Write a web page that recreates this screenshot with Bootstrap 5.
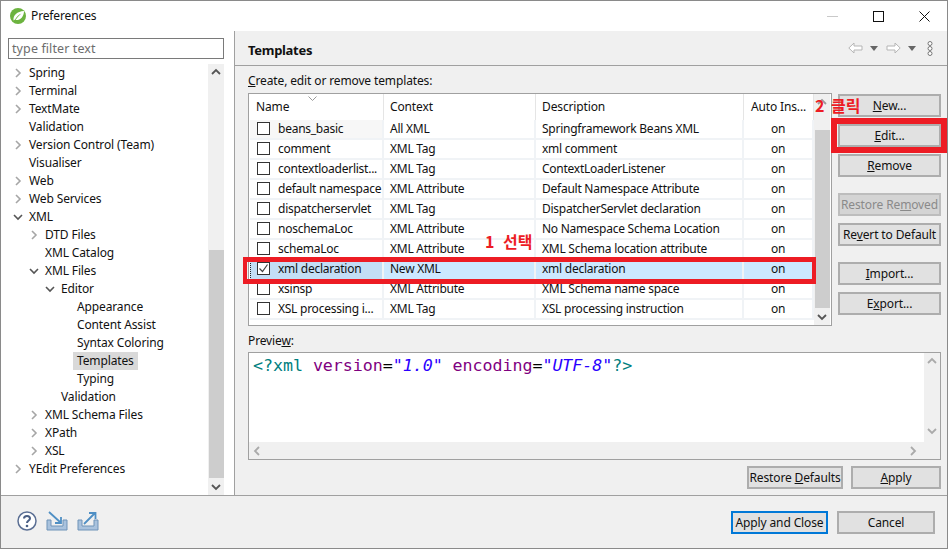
<!DOCTYPE html>
<html lang="en"><head><meta charset="utf-8"><title>Preferences</title>
<link href="https://cdn.jsdelivr.net/npm/bootstrap@5.3.0/dist/css/bootstrap.min.css" rel="stylesheet">
<style>
html,body{margin:0;height:549px;overflow:hidden;background:#fff}
body{font:12px/16px "Noto Sans","Liberation Sans",sans-serif;color:#111;letter-spacing:-.13px}
.win{position:relative;width:948px;height:549px;border:1px solid #8a8a8a;display:flex;flex-direction:column;overflow:hidden}
.titlebar{height:30px;flex:none;background:#fff;padding-left:9px}
.titlename{margin-left:5px}
.wbtns{margin-left:auto;padding-right:17px;gap:35px}
.mainarea{flex:1;min-height:0}
.leftpane{width:234px;flex:none;background:#fff;border-right:1px solid #a0a0a0;padding:7px 10px 0 7px}
.filter{height:21px;border:1px solid #7a7a7a;padding:0 3px;color:#6d6d6d;line-height:19px;font-size:12.5px;letter-spacing:.1px}
.treewrap{height:431px;margin-top:5px}
.tree{flex:1;list-style:none;margin:0;padding:0;width:0}
.tree li{height:18px;line-height:18px;white-space:nowrap;display:flex;align-items:center}
.tw{width:10px;flex:none;margin-right:6px;margin-left:5px}
.l1{padding-left:16px}.l2{padding-left:32px}.l3{padding-left:48px}
.l3 span{padding:0 4px;margin-left:-4px}
.sel{background:#d9d9d9}
.vsb{width:16px;flex:none;background:#f0f0f0;display:flex;flex-direction:column;align-items:center;justify-content:space-between}
.vsb .thumb{background:#cdcdcd;width:15px;margin-bottom:auto}
.tthumb{height:228px;margin-top:174px}
.ththumb{height:178px;margin-top:24px}
.rightpane{flex:1;background:#f0f0f0;min-width:0}
.phead{height:35px;border-bottom:1px solid #a0a0a0;padding:3px 10px 0 13px;font-weight:700;font-size:13px;letter-spacing:-.3px}
.tools{margin-left:auto;gap:7px;padding-right:4px;margin-top:-3px}
.fwd{margin-left:1px}
.pbody{padding:7px 6px 0 13px}
.tblrow{gap:6px;margin-top:4px}
.tblbox{width:584px;height:233px;border:1px solid #a0a0a0;background:#fff;padding:0 1px}
.tblinner{flex:1;min-width:0;overflow:hidden}
table.tpl{width:100%;table-layout:fixed;border-collapse:separate;border-spacing:0;margin:0}
.tpl th{font-weight:400;height:26px;padding:0 0 0 6px;border-right:1px solid #e5e5e5;white-space:nowrap;position:relative}
.sortc{position:absolute;left:58px;top:2px}
.tpl td{height:20px;padding:0 0 0 6px;border-right:2px solid #f0f3f6;border-bottom:2px solid #f0f3f6;white-space:nowrap;overflow:hidden;letter-spacing:-.25px}
.tpl td.nm{padding-left:7px}
.tpl td:last-child,.tpl th:last-child{padding:0;text-align:center}
.tpl tr.first td.nm{background:#f7f7f7}
.ck{display:inline-block;width:13px;height:13px;border:1px solid #333;background:#fff;vertical-align:-2px;margin-right:8px;position:relative}
.tpl tr.hl td{background:#cce8ff;border-bottom:1px dotted #222;padding-bottom:1px}
.tpl tr.hl td.nm{background:#c3def5;border-left:1px dotted #222;padding-left:6px}
.btnw{width:103px;flex:none;gap:7px;margin-top:1px}
.ebtn{display:block;width:103px;height:23px;padding:0;border:2px solid #adadad;border-radius:0;background:#e1e1e1;color:#111;font-size:12px;line-height:18px;text-align:center;white-space:nowrap;letter-spacing:-.13px}
.ebtn:disabled{color:#8a8a8a;background:#d4d4d4;opacity:1;border-color:#bdbdbd}
.gap1,.gap2{margin-top:9px}
.prevlabel{margin-top:7px}
.prevbox{height:108px;border:1px solid #a0a0a0;background:#fff;margin-top:3px;display:flex}
.prevmain{flex:1;min-width:0;display:flex;flex-direction:column}
.code{flex:1;font:16.67px/22px "DejaVu Sans Mono",monospace;padding:2px 0 0 4px;letter-spacing:-.05px;white-space:pre}
.hsb{height:17px;background:#f0f0f0;display:flex;align-items:center;justify-content:space-between;padding:0 7px 0 4px}
.c1{color:#008080}.c2{color:#7f007f}.c3{color:#2a00ff;font-style:italic}.c0{color:#000}
.pfoot{gap:8px;margin-top:6px;justify-content:flex-end}
.w96{width:96px}.w90{width:90px}.w97{width:97px}.w98{width:98px}
.bottombar{height:53px;flex:none;background:#f0f0f0;border-top:1px solid #a0a0a0;padding:1px 12px 0 16px}
.bicons{gap:9px;margin-top:-3px}
.footbtns{gap:9px}
.ebtn.dflt{border-color:#0078d7}
.redbox{position:absolute;border-style:solid;border-color:#ed1c24}
.rb1{left:242px;top:256px;width:573px;height:27px;border-width:5px 4px}
.rb2{left:830px;top:117px;width:116px;height:35px;border-width:6px 6px}
.note{position:absolute;color:#ed1c24;font:700 16px/18px "Noto Sans CJK KR",sans-serif;white-space:nowrap;word-spacing:5px;letter-spacing:0}
.n1{left:484px;top:231px}
.n2{left:814px;top:95px;word-spacing:3px}
</style></head><body>
<div class="win">
 <div class="titlebar d-flex align-items-center">
  <svg width="16" height="16" viewBox="0 0 16 16"><circle cx="8" cy="8" r="8" fill="#6cb33f"/><path d="M3.500 12.500C3 7 7 3.500 14 3c0 6-4 9.500-8.500 9 2-3 4-5 6-6.500-3 1-5 3.500-6.500 6z" fill="#fff"/></svg>
  <span class="titlename">Preferences</span>
  <div class="wbtns d-flex align-items-center">
   <svg width="11" height="11" viewBox="0 0 11 11"><path d="M0 5.500h11" stroke="#c9c9c9"/></svg>
   <svg width="11" height="11" viewBox="0 0 11 11"><rect x=".5" y=".5" width="10" height="10" fill="none" stroke="#111"/></svg>
   <svg width="11" height="11" viewBox="0 0 11 11"><path d="M.5.500l10 10M10.500.500l-10 10" stroke="#111" fill="none"/></svg>
  </div>
 </div>
 <div class="mainarea d-flex">
  <div class="leftpane">
   <div class="filter">type filter text</div>
   <div class="treewrap d-flex">
    <ul class="tree">
     <li><svg class="tw" width="10" height="10" viewBox="0 0 10 10"><path d="M3 1l4 4-4 4" fill="none" stroke="#a6a6a6" stroke-width="1.600"/></svg>Spring</li>
     <li><svg class="tw" width="10" height="10" viewBox="0 0 10 10"><path d="M3 1l4 4-4 4" fill="none" stroke="#a6a6a6" stroke-width="1.600"/></svg>Terminal</li>
     <li><svg class="tw" width="10" height="10" viewBox="0 0 10 10"><path d="M3 1l4 4-4 4" fill="none" stroke="#a6a6a6" stroke-width="1.600"/></svg>TextMate</li>
     <li><i class="tw"></i>Validation</li>
     <li><svg class="tw" width="10" height="10" viewBox="0 0 10 10"><path d="M3 1l4 4-4 4" fill="none" stroke="#a6a6a6" stroke-width="1.600"/></svg>Version Control (Team)</li>
     <li><i class="tw"></i>Visualiser</li>
     <li><svg class="tw" width="10" height="10" viewBox="0 0 10 10"><path d="M3 1l4 4-4 4" fill="none" stroke="#a6a6a6" stroke-width="1.600"/></svg>Web</li>
     <li><svg class="tw" width="10" height="10" viewBox="0 0 10 10"><path d="M3 1l4 4-4 4" fill="none" stroke="#a6a6a6" stroke-width="1.600"/></svg>Web Services</li>
     <li><svg class="tw" width="10" height="10" viewBox="0 0 10 10"><path d="M1 3l4 4 4-4" fill="none" stroke="#555" stroke-width="1.600"/></svg>XML</li>
     <li class="l1"><svg class="tw" width="10" height="10" viewBox="0 0 10 10"><path d="M3 1l4 4-4 4" fill="none" stroke="#a6a6a6" stroke-width="1.600"/></svg>DTD Files</li>
     <li class="l1"><i class="tw"></i>XML Catalog</li>
     <li class="l1"><svg class="tw" width="10" height="10" viewBox="0 0 10 10"><path d="M1 3l4 4 4-4" fill="none" stroke="#555" stroke-width="1.600"/></svg>XML Files</li>
     <li class="l2"><svg class="tw" width="10" height="10" viewBox="0 0 10 10"><path d="M1 3l4 4 4-4" fill="none" stroke="#555" stroke-width="1.600"/></svg>Editor</li>
     <li class="l3"><i class="tw"></i><span>Appearance</span></li>
     <li class="l3"><i class="tw"></i><span>Content Assist</span></li>
     <li class="l3"><i class="tw"></i><span>Syntax Coloring</span></li>
     <li class="l3"><i class="tw"></i><span class="sel">Templates</span></li>
     <li class="l3"><i class="tw"></i><span>Typing</span></li>
     <li class="l2"><i class="tw"></i>Validation</li>
     <li class="l1"><svg class="tw" width="10" height="10" viewBox="0 0 10 10"><path d="M3 1l4 4-4 4" fill="none" stroke="#a6a6a6" stroke-width="1.600"/></svg>XML Schema Files</li>
     <li class="l1"><svg class="tw" width="10" height="10" viewBox="0 0 10 10"><path d="M3 1l4 4-4 4" fill="none" stroke="#a6a6a6" stroke-width="1.600"/></svg>XPath</li>
     <li class="l1"><svg class="tw" width="10" height="10" viewBox="0 0 10 10"><path d="M3 1l4 4-4 4" fill="none" stroke="#a6a6a6" stroke-width="1.600"/></svg>XSL</li>
     <li><svg class="tw" width="10" height="10" viewBox="0 0 10 10"><path d="M3 1l4 4-4 4" fill="none" stroke="#a6a6a6" stroke-width="1.600"/></svg>YEdit Preferences</li>
    </ul>
    <div class="vsb">
     <svg class="mt-1" width="10" height="8" viewBox="0 0 10 8"><path d="M1 6l4-4 4 4" fill="none" stroke="#555" stroke-width="1.800"/></svg>
     <div class="thumb tthumb"></div>
     <svg class="mb-1" width="10" height="8" viewBox="0 0 10 8"><path d="M1 2l4 4 4-4" fill="none" stroke="#555" stroke-width="1.800"/></svg>
    </div>
   </div>
  </div>
  <div class="rightpane">
   <div class="phead d-flex align-items-center">Templates
    <div class="tools d-flex align-items-center">
     <svg width="15" height="12" viewBox="0 0 15 12"><path d="M.8 6L6 1v3h8v4H6v3z" fill="#fff" stroke="#b5b5b5"/></svg>
     <svg width="8" height="5" viewBox="0 0 8 5"><path d="M0 0h8L4 5z" fill="#666"/></svg>
     <svg class="fwd" width="15" height="12" viewBox="0 0 15 12"><path d="M14.200 6L9 1v3H1v4h8v3z" fill="#fff" stroke="#b5b5b5"/></svg>
     <svg width="8" height="5" viewBox="0 0 8 5"><path d="M0 0h8L4 5z" fill="#666"/></svg>
     <svg class="ms-1" width="6" height="15" viewBox="0 0 6 15"><g fill="#fff" stroke="#777"><circle cx="3" cy="2.500" r="2"/><circle cx="3" cy="7.500" r="2"/><circle cx="3" cy="12.500" r="2"/></g></svg>
    </div>
   </div>
   <div class="pbody">
    <div><u>C</u>reate, edit or remove templates:</div>
    <div class="tblrow d-flex">
     <div class="tblbox d-flex">
      <div class="tblinner">
       <table class="tpl">
        <colgroup><col style="width:134px"><col style="width:152px"><col style="width:208px"><col></colgroup>
        <thead><tr><th>Name<svg class="sortc" width="9" height="5" viewBox="0 0 9 5"><path d="M.5.500l4 4 4-4" fill="none" stroke="#999"/></svg></th><th>Context</th><th>Description</th><th>Auto Ins...</th></tr></thead>
        <tbody>
         <tr class="first"><td class="nm"><i class="ck"></i>beans_basic</td><td>All XML</td><td>Springframework Beans XML</td><td>on</td></tr>
         <tr><td class="nm"><i class="ck"></i>comment</td><td>XML Tag</td><td>xml comment</td><td>on</td></tr>
         <tr><td class="nm"><i class="ck"></i>contextloaderlist...</td><td>XML Tag</td><td>ContextLoaderListener</td><td>on</td></tr>
         <tr><td class="nm"><i class="ck"></i>default namespace</td><td>XML Attribute</td><td>Default Namespace Attribute</td><td>on</td></tr>
         <tr><td class="nm"><i class="ck"></i>dispatcherservlet</td><td>XML Tag</td><td>DispatcherServlet declaration</td><td>on</td></tr>
         <tr><td class="nm"><i class="ck"></i>noschemaLoc</td><td>XML Attribute</td><td>No Namespace Schema Location</td><td>on</td></tr>
         <tr><td class="nm"><i class="ck"></i>schemaLoc</td><td>XML Attribute</td><td>XML Schema location attribute</td><td>on</td></tr>
         <tr class="hl"><td class="nm"><i class="ck"><svg class="position-absolute top-0 start-0" width="11" height="11" viewBox="0 0 11 11"><path d="M1.500 5.500l3 3 5-7" fill="none" stroke="#444" stroke-width="1.200"/></svg></i>xml declaration</td><td>New XML</td><td>xml declaration</td><td>on</td></tr>
         <tr><td class="nm"><i class="ck"></i>xsinsp</td><td>XML Attribute</td><td>XML Schema name space</td><td>on</td></tr>
         <tr><td class="nm"><i class="ck"></i>XSL processing i...</td><td>XML Tag</td><td>XSL processing instruction</td><td>on</td></tr>
        </tbody>
       </table>
      </div>
      <div class="vsb">
       <svg class="mt-1" width="10" height="8" viewBox="0 0 10 8"><path d="M1 6l4-4 4 4" fill="none" stroke="#999" stroke-width="1.800"/></svg>
       <div class="thumb ththumb"></div>
       <svg class="mb-1" width="10" height="8" viewBox="0 0 10 8"><path d="M1 2l4 4 4-4" fill="none" stroke="#555" stroke-width="1.800"/></svg>
      </div>
     </div>
     <div class="btnw d-flex flex-column">
      <button class="ebtn btn"><u>N</u>ew...</button>
      <button class="ebtn btn"><u>E</u>dit...</button>
      <button class="ebtn btn"><u>R</u>emove</button>
      <button class="ebtn btn gap1" disabled>Restore Re<u>m</u>oved</button>
      <button class="ebtn btn">Re<u>v</u>ert to Default</button>
      <button class="ebtn btn gap2"><u>I</u>mport...</button>
      <button class="ebtn btn">E<u>x</u>port...</button>
     </div>
    </div>
    <div class="prevlabel">Previe<u>w</u>:</div>
    <div class="prevbox">
     <div class="prevmain">
      <div class="code"><span class="c1">&lt;?xml </span><span class="c2">version</span><span class="c0">=</span><span class="c3">"1.0"</span> <span class="c2">encoding</span><span class="c0">=</span><span class="c3">"UTF-8"</span><span class="c1">?&gt;</span></div>
      <div class="hsb">
       <svg width="8" height="10" viewBox="0 0 8 10"><path d="M6 1L2 5l4 4" fill="none" stroke="#aaa" stroke-width="1.800"/></svg>
       <svg width="8" height="10" viewBox="0 0 8 10"><path d="M2 1l4 4-4 4" fill="none" stroke="#aaa" stroke-width="1.800"/></svg>
      </div>
     </div>
     <div class="vsb">
      <svg class="mt-1" width="10" height="8" viewBox="0 0 10 8"><path d="M1 6l4-4 4 4" fill="none" stroke="#aaa" stroke-width="1.800"/></svg>
      <svg class="mb-4" width="10" height="8" viewBox="0 0 10 8"><path d="M1 2l4 4 4-4" fill="none" stroke="#aaa" stroke-width="1.800"/></svg>
     </div>
    </div>
    <div class="pfoot d-flex">
     <button class="ebtn btn w96">Restore <u>D</u>efaults</button>
     <button class="ebtn btn w90"><u>A</u>pply</button>
    </div>
   </div>
  </div>
 </div>
 <div class="bottombar d-flex align-items-center">
  <div class="bicons d-flex align-items-center">
   <svg width="20" height="20" viewBox="0 0 20 20"><circle cx="10" cy="10" r="9" fill="#fff" stroke="#5b6f94" stroke-width="1.500"/><path d="M7 7.500c0-3.500 6-3.500 6 0 0 2-3 2-3 4.500" fill="none" stroke="#4a5f85" stroke-width="2"/><circle cx="10" cy="15" r="1.300" fill="#4a5f85"/></svg>
   <svg width="22" height="20" viewBox="0 0 22 20"><path d="M1 9h4v6h12V9h4v10H1z" fill="#a9c2dd" stroke="#6f93b8"/><path d="M3 1l11 10m-5 1h6V6" fill="none" stroke="#4f8fc4" stroke-width="1.800"/></svg>
   <svg width="22" height="20" viewBox="0 0 22 20"><path d="M1 9h4v6h12V9h4v10H1z" fill="#a9c2dd" stroke="#6f93b8"/><path d="M7 13L18 2m-6 0h6.500v6" fill="none" stroke="#4f8fc4" stroke-width="1.800"/></svg>
  </div>
  <div class="footbtns ms-auto d-flex">
   <button class="ebtn btn dflt w97">Apply and Close</button>
   <button class="ebtn btn w98">Cancel</button>
  </div>
 </div>
 <div class="redbox rb1"></div>
 <div class="redbox rb2"></div>
 <div class="note n1">1 선택</div>
 <div class="note n2">2 클릭</div>
</div>
</body></html>
